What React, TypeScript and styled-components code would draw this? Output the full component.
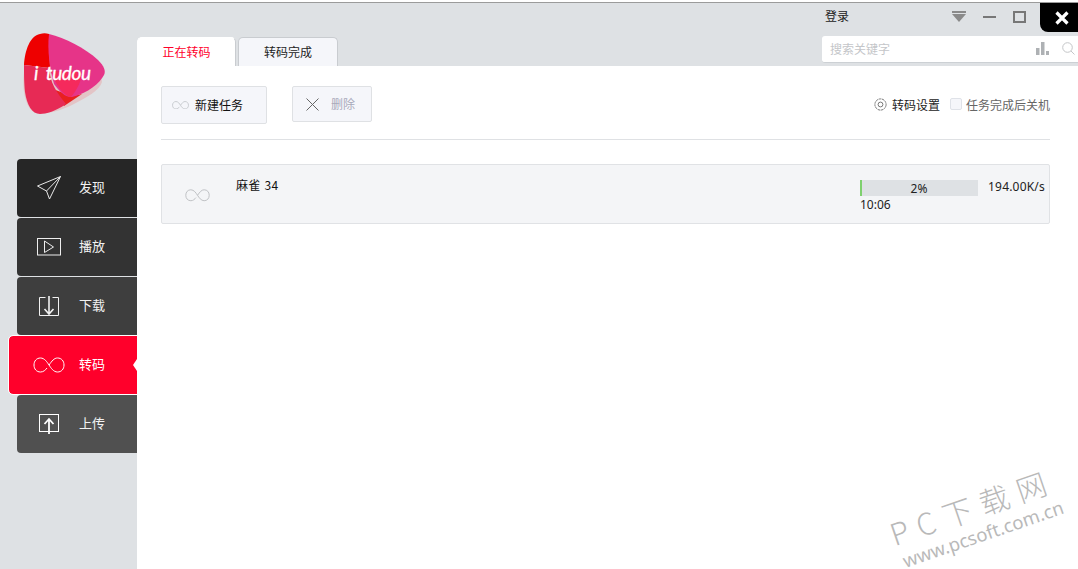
import React from 'react';
import { FC, ReactNode } from 'react';
import styled, { createGlobalStyle } from 'styled-components';

const GlobalStyle = createGlobalStyle`
  html, body {
    margin: 0;
    padding: 0;
    background: #fff;
  }
  body {
    font-family: "Noto Sans CJK SC", "Noto Sans", sans-serif;
    font-size: 12px;
    color: #222;
  }
`;

const Logo: FC = () => (
  <svg width="90" height="90" viewBox="20 30 90 90">
    <path d="M24 72 C22 90 25 104 32 111 C40 116 58 112 72 105 C86 98 100 90 102 82 L100 70 L40 60 Z" fill="#e3c4c6" />
    <path d="M24 65 C25 50 30 36 40 34 C43 33 46 33 49 34 L50 68 Z" fill="#ee0000" />
    <path d="M50 88 L72 96 L82 94 L64 106 Z" fill="#e8201f" />
    <path d="M49 34 C65 38 85 48 98 60 C104 66 106 71 104 75 C100 83 88 93 72 97 C66 98 60 92 54 84 C50 70 47 50 49 34 Z" fill="#e63488" />
    <path d="M24 65 L49 68 C50 82 56 92 66 104 C56 111 46 114 40 114 C32 114 27 105 25 92 C24 82 24 72 24 65 Z" fill="#e72a55" />
    <path d="M51 71 L82 72 C82 80 77 90 71 97 C64 96 55 85 51 71 Z" fill="#f52a5c" />
    <text x="34" y="80" fontFamily="Lato, sans-serif" fontStyle="italic" fontSize="19" fill="#fff" stroke="#fff" strokeWidth="0.3" wordSpacing="4" textLength="57">i tudou</text>
  </svg>
);

const DiscoverIcon: FC = () => (
  <svg width="26" height="26" viewBox="0 0 26 26" fill="none" stroke="#e8e8e8" strokeWidth="1">
    <path d="M1.5 11 L24.5 1.5 L13.5 24 L10.5 16 Z" />
    <path d="M24.5 1.5 L10.5 16" />
  </svg>
);

const PlayIcon: FC = () => (
  <svg width="24" height="18" viewBox="0 0 24 18" fill="none" stroke="#eee" strokeWidth="1">
    <rect x="0.5" y="0.5" width="23" height="16.5" />
    <path d="M7.5 3 L16.5 9 L7.5 14.5 Z" />
  </svg>
);

const DownloadIcon: FC = () => (
  <svg width="20" height="21" viewBox="0 0 20 21" fill="none" stroke="#f2f2f2" strokeWidth="1">
    <path d="M6.5 1.5 H0.5 V19.5 H19.5 V1.5 H13.5" />
    <path d="M10 0 V18 M5.5 13 L10 18 L14.5 13" strokeWidth="1.6" />
  </svg>
);

const UploadIcon: FC = () => (
  <svg width="20" height="20" viewBox="0 0 20 20" fill="none" stroke="#fff" strokeWidth="1">
    <rect x="0.5" y="0.5" width="19" height="17" />
    <path d="M10 20 V5 M5.5 10 L10 5 L14.5 10" strokeWidth="1.8" />
  </svg>
);

const Infinity: FC<{ width: number; color: string }> = ({ width, color }) => (
  <svg width={width} height={width / 2} viewBox="0 0 32 16" fill="none" stroke={color} strokeWidth={32 / width}>
    <path d="M16 8 C19 4 21 1 24.5 1 C28.5 1 31 4 31 8 C31 12 28.5 15 24.5 15 C20.5 15 18 11 16 8 C14 5 11.5 1 7.5 1 C3.5 1 1 4 1 8 C1 12 3.5 15 7.5 15 C10.5 15 12.5 13 14 11" />
  </svg>
);

const navItems: { label: string; icon: ReactNode; bg: string }[] = [
  { label: '发现', icon: <DiscoverIcon />, bg: '#262626' },
  { label: '播放', icon: <PlayIcon />, bg: '#333333' },
  { label: '下载', icon: <DownloadIcon />, bg: '#3e3e3e' },
  { label: '转码', icon: <Infinity width={32} color="#fff" />, bg: '#ff002b' },
  { label: '上传', icon: <UploadIcon />, bg: '#505050' },
];

const App: FC = () => {
  return (
    <>
      <GlobalStyle />
      <Window>
        <Sidebar>
          <LogoBox>
            <Logo />
          </LogoBox>
          <Nav>
            {navItems.map((item) => (
              <NavItem key={item.label} $bg={item.bg} $active={item.label === '转码'}>
                <NavIcon>{item.icon}</NavIcon>
                <NavLabel>{item.label}</NavLabel>
              </NavItem>
            ))}
          </Nav>
        </Sidebar>
        <Right>
          <TitleBar>
            <Login>登录</Login>
            <Menu />
            <MinButton />
            <MaxButton />
            <CloseButton>
              <svg width="14" height="14" viewBox="0 0 14 14" stroke="#fff" strokeWidth="3.2">
                <path d="M1.5 1.5 L12.5 12.5 M12.5 1.5 L1.5 12.5" />
              </svg>
            </CloseButton>
          </TitleBar>
          <TabRow>
            <Tabs>
              <Tab $active>正在转码</Tab>
              <Tab>转码完成</Tab>
            </Tabs>
            <SearchBox>
              <SearchText>搜索关键字</SearchText>
              <svg width="13" height="13" viewBox="0 0 13 13" fill="#aeb1b4">
                <rect x="0" y="6" width="3.5" height="7" />
                <rect x="5" y="0" width="3.5" height="13" />
                <rect x="10" y="9" width="3" height="4" />
              </svg>
              <svg width="13" height="13" viewBox="0 0 13 13" fill="none" stroke="#c4c6c8" strokeWidth="1">
                <circle cx="5.5" cy="5.5" r="4.8" />
                <path d="M9 9 L12.5 12.5" />
              </svg>
            </SearchBox>
          </TabRow>
          <Content>
            <Toolbar>
              <NewButton>
                <Infinity width={17} color="#c9ccd0" />
                <ButtonLabel>新建任务</ButtonLabel>
              </NewButton>
              <DeleteButton>
                <svg width="13" height="13" viewBox="0 0 13 13" stroke="#666" strokeWidth="1">
                  <path d="M0.5 0.5 L12.5 12.5 M12.5 0.5 L0.5 12.5" />
                </svg>
                <ButtonLabel>删除</ButtonLabel>
              </DeleteButton>
              <Options>
                <svg width="13" height="13" viewBox="0 0 13 13" fill="none" stroke="#777" strokeWidth="1">
                  <circle cx="6.5" cy="6.5" r="5.6" strokeDasharray="2.4 0.6" />
                  <circle cx="6.5" cy="6.5" r="2.4" />
                </svg>
                <SettingText>转码设置</SettingText>
                <CheckBox />
                <ShutdownText>任务完成后关机</ShutdownText>
              </Options>
            </Toolbar>
            <TaskRow>
              <TaskIcon>
                <Infinity width={25} color="#c0c2c5" />
              </TaskIcon>
              <TaskName>麻雀 34</TaskName>
              <Progress>
                <ProgressTop>
                  <Bar>
                    <BarFill style={{ width: '2%' }} />
                    <BarLabel>2%</BarLabel>
                  </Bar>
                  <Speed>194.00K/s</Speed>
                </ProgressTop>
                <TimeLeft>10:06</TimeLeft>
              </Progress>
            </TaskRow>
          </Content>
          <Watermark>
            <WatermarkTitle>PC下载网</WatermarkTitle>
            <WatermarkUrl>www.pcsoft.com.cn</WatermarkUrl>
          </Watermark>
        </Right>
      </Window>
    </>
  );
};

export default App;

const Window = styled.div`
  position: relative;
  display: flex;
  width: 1078px;
  height: 567px;
  box-sizing: border-box;
  margin-top: 2px;
  border-top: 1px solid #9b9b9b;
  background: #dee1e4;
  overflow: hidden;
`;

const Sidebar = styled.aside`
  flex: 0 0 137px;
  display: flex;
  flex-direction: column;
`;

const LogoBox = styled.div`
  height: 156px;
  padding: 27px 0 0 20px;
  box-sizing: border-box;

  svg {
    display: block;
  }
`;

const Nav = styled.nav`
  display: flex;
  flex-direction: column;
  gap: 1px;
  align-items: flex-end;
`;

const NavItem = styled.div<{ $bg: string; $active?: boolean }>`
  position: relative;
  display: flex;
  align-items: center;
  width: ${(p) => (p.$active ? '128px' : '120px')};
  height: 58px;
  box-sizing: border-box;
  padding-left: ${(p) => (p.$active ? '23px' : '15px')};
  background: ${(p) => p.$bg};
  border-radius: 4px 0 0 4px;
  color: #f2f2f2;
  font-size: 13px;
  ${(p) => p.$active && `
    outline: 1px solid #fff;
    color: #fff;
    &::after {
      content: '';
      position: absolute;
      right: 0;
      top: 23px;
      border-style: solid;
      border-width: 6px 4px 6px 0;
      border-color: transparent #fff transparent transparent;
    }
  `}
`;

const NavIcon = styled.div`
  flex: 0 0 34px;
  margin-right: 13px;
  display: flex;
  justify-content: center;
  align-items: center;
`;

const NavLabel = styled.span`
  margin-top: -3px;
`;

const Right = styled.main`
  position: relative;
  flex: 1;
  display: flex;
  flex-direction: column;
  min-width: 0;
`;

const TitleBar = styled.div`
  display: flex;
  align-items: flex-start;
  height: 29px;
`;

const Login = styled.span`
  margin: 4px 0 0 688px;
  width: 127px;
  font-size: 12px;
  line-height: 18px;
  color: #222;
`;

const Menu = styled.div`
  margin-top: 8px;
  width: 14px;
  height: 11px;
  box-sizing: border-box;
  border-top: 2px solid #8a8a8a;
  position: relative;

  &::after {
    content: '';
    position: absolute;
    left: 0;
    top: 1px;
    border-style: solid;
    border-width: 8px 7px 0 7px;
    border-color: #8a8a8a transparent transparent transparent;
  }
`;

const MinButton = styled.div`
  margin: 13px 0 0 17px;
  width: 13px;
  height: 2px;
  background: #777;
`;

const MaxButton = styled.div`
  margin: 8px 0 0 17px;
  width: 13px;
  height: 12px;
  border: 2px solid #777;
  box-sizing: border-box;
`;

const CloseButton = styled.div`
  margin-left: 14px;
  flex: 1;
  height: 29px;
  background: #000;
  border-bottom-left-radius: 8px;
  display: flex;
  align-items: center;
  justify-content: center;
  padding-left: 6px;
`;

const TabRow = styled.div`
  display: flex;
  justify-content: space-between;
  align-items: flex-end;
  height: 34px;
`;

const Tabs = styled.div`
  display: flex;
  gap: 2px;
  align-self: flex-end;
`;

const Tab = styled.div<{ $active?: boolean }>`
  width: ${(p) => (p.$active ? '99px' : '100px')};
  height: 29px;
  box-sizing: border-box;
  border: 1px solid #c9ccd0;
  border-bottom: none;
  border-radius: 5px 5px 0 0;
  background: ${(p) => (p.$active ? '#fff' : '#f5f6fa')};
  color: ${(p) => (p.$active ? '#ff002b' : '#222')};
  ${(p) => p.$active && 'border-color: #fff; border-right-color: #c9ccd0;'}
  text-align: center;
  font-size: 12px;
  line-height: 28px;
`;

const SearchBox = styled.div`
  display: flex;
  align-items: center;
  gap: 13px;
  width: 256px;
  height: 27px;
  margin-bottom: 3px;
  box-sizing: border-box;
  padding: 0 3px 1px 8px;
  background: #fff;
  border-bottom: 1px solid #ccd0d4;
  border-radius: 3px 0 0 3px;
`;

const SearchText = styled.span`
  flex: 1;
  color: #c4c6c9;
  font-size: 12px;
`;

const Content = styled.section`
  flex: 1;
  background: #fff;
  padding: 20px 28px 0 24px;
`;

const Toolbar = styled.div`
  display: flex;
  align-items: flex-start;
  height: 53px;
  border-bottom: 1px solid #dfe1e4;
`;

const ButtonLabel = styled.span`
  margin-top: -2px;
`;

const NewButton = styled.div`
  display: flex;
  align-items: center;
  gap: 6px;
  width: 106px;
  height: 38px;
  box-sizing: border-box;
  padding-left: 10px;
  background: #f5f6fa;
  border: 1px solid #dfe1e4;
  border-radius: 2px;
  color: #111;
`;

const DeleteButton = styled.div`
  display: flex;
  align-items: center;
  gap: 12px;
  width: 80px;
  height: 36px;
  margin-left: 25px;
  box-sizing: border-box;
  padding-left: 13px;
  background: #f5f6fa;
  border: 1px solid #dfe1e4;
  border-radius: 2px;
  color: #a9a9bb;
`;

const Options = styled.div`
  margin-left: auto;
  display: flex;
  align-items: center;
  height: 36px;
`;

const SettingText = styled.span`
  margin-left: 5px;
  color: #222;
`;

const CheckBox = styled.div`
  width: 12px;
  height: 12px;
  margin: 0 4px 0 10px;
  box-sizing: border-box;
  background: #f5f6fa;
  border: 1px solid #dfe2e8;
  border-radius: 2px;
`;

const ShutdownText = styled.span`
  color: #666;
`;

const TaskRow = styled.div`
  display: flex;
  height: 60px;
  margin-top: 24px;
  box-sizing: border-box;
  background: #f4f5f7;
  border: 1px solid #e0e2e5;
  border-radius: 2px;
`;

const TaskIcon = styled.div`
  flex: 0 0 74px;
  padding: 24px 0 0 23px;
  box-sizing: border-box;

  svg {
    display: block;
  }
`;

const TaskName = styled.div`
  flex: 1;
  padding-top: 11px;
  line-height: 18px;
  color: #111;
  word-spacing: 1px;
  letter-spacing: 0.3px;
`;

const Progress = styled.div`
  flex: 0 0 189px;
  padding-top: 15px;
  box-sizing: border-box;
  font-family: "Noto Sans", sans-serif;
`;

const ProgressTop = styled.div`
  display: flex;
`;

const Bar = styled.div`
  position: relative;
  width: 118px;
  height: 16px;
  background: #dee1e4;
`;

const BarFill = styled.div`
  height: 100%;
  background: #7ed06e;
`;

const BarLabel = styled.span`
  position: absolute;
  inset: 0;
  text-align: center;
  line-height: 17px;
  color: #222;
`;

const Speed = styled.span`
  margin-left: 10px;
  line-height: 14px;
  letter-spacing: 0.2px;
  color: #222;
`;

const TimeLeft = styled.div`
  line-height: 17px;
  color: #222;
`;

const Watermark = styled.div`
  position: absolute;
  left: 748px;
  top: 515px;
  width: 200px;
  transform: rotate(-19deg);
  transform-origin: 0 0;
  color: #b9b9b9;
  font-family: "Noto Sans", "Noto Sans CJK SC", sans-serif;
`;

const WatermarkTitle = styled.div`
  font-size: 30px;
  line-height: 34px;
  letter-spacing: 9px;
  white-space: nowrap;
  font-family: "Noto Sans CJK SC", sans-serif;
  font-weight: 300;
`;

const WatermarkUrl = styled.div`
  font-size: 18.5px;
  line-height: 22px;
  white-space: nowrap;
  margin: 2px 0 0 3px;
`;
